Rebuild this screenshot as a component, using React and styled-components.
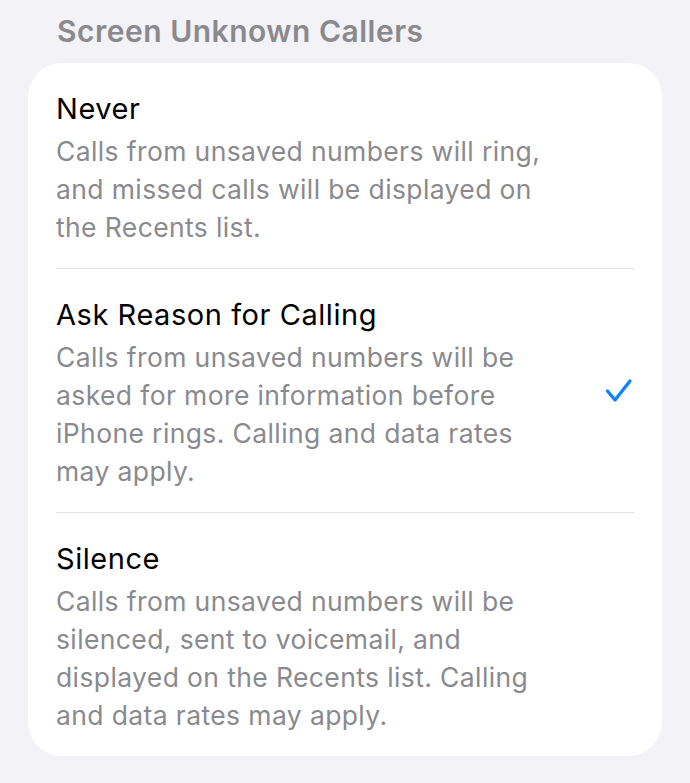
import React from "react";
import styled, { createGlobalStyle } from "styled-components";

const Global = createGlobalStyle`
  html, body {
    margin: 0;
    padding: 0;
    background: #f2f2f7;
  }
  body {
    font-family: Inter, "Noto Sans", "Liberation Sans", sans-serif;
    -webkit-font-smoothing: antialiased;
  }
`;

const Page = styled.div`
  padding: 13px 28px 27px 28px;
  display: flex;
  flex-direction: column;
`;

const SectionHeader = styled.h2`
  margin: 0 0 14px 29px;
  font-size: 30px;
  line-height: 36px;
  font-weight: 600;
  color: #8a8a8e;
  letter-spacing: 0.5px;
`;

const Card = styled.div`
  background: #ffffff;
  border-radius: 34px;
  padding: 0 28px;
  display: flex;
  flex-direction: column;
`;

const Option = styled.div`
  display: flex;
  align-items: center;
  gap: 16px;
  padding: 28px 0 22px;
  border-top: ${(p) => (p.$first ? "none" : "1.5px solid #e3e3e6")};
`;

const Text = styled.div`
  flex: 1;
  display: flex;
  flex-direction: column;
  gap: 5px;
`;

const Title = styled.div`
  font-size: 29px;
  line-height: 36px;
  color: #000;
  font-weight: 400;
  letter-spacing: 0.55px;
`;

const Description = styled.div`
  font-size: 26.5px;
  line-height: 38px;
  color: #8a8a8e;
  font-weight: 400;
  letter-spacing: 0.38px;
`;

const Line = styled.span`
  display: block;
  white-space: nowrap;
`;

const Check = styled.svg`
  width: 28px;
  height: 26px;
  flex: none;
  margin: 0 1px 6px 0;
`;

const options = [
  {
    title: "Never",
    lines: [
      "Calls from unsaved numbers will ring,",
      "and missed calls will be displayed on",
      "the Recents list.",
    ],
  },
  {
    title: "Ask Reason for Calling",
    selected: true,
    lines: [
      "Calls from unsaved numbers will be",
      "asked for more information before",
      "iPhone rings. Calling and data rates",
      "may apply.",
    ],
  },
  {
    title: "Silence",
    lines: [
      "Calls from unsaved numbers will be",
      "silenced, sent to voicemail, and",
      "displayed on the Recents list. Calling",
      "and data rates may apply.",
    ],
  },
];

export default function App() {
  return (
    <>
      <Global />
      <Page>
        <SectionHeader>Screen Unknown Callers</SectionHeader>
        <Card>
          {options.map((o, i) => (
            <Option key={o.title} $first={i === 0}>
              <Text>
                <Title>{o.title}</Title>
                <Description>
                  {o.lines.map((l) => (
                    <Line key={l}>{l}</Line>
                  ))}
                </Description>
              </Text>
              {o.selected && (
                <Check viewBox="0 0 28 26">
                  <polyline
                    points="2.5,13 10,22 25,3"
                    fill="none"
                    stroke="#0a84ff"
                    strokeWidth="3.3"
                    strokeLinecap="round"
                    strokeLinejoin="round"
                  />
                </Check>
              )}
            </Option>
          ))}
        </Card>
      </Page>
    </>
  );
}
